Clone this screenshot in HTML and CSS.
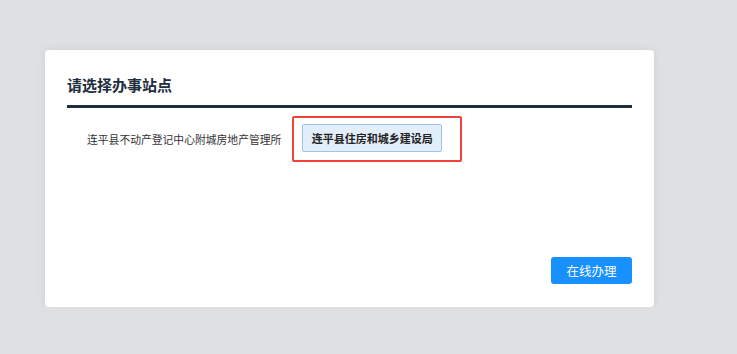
FILE: index.html
```html
<!DOCTYPE html>
<html lang="zh">
<head>
  <meta charset="UTF-8">
  <title>请选择办事站点</title>
  <link rel="stylesheet" href="styles.css">
</head>
<body>
  <div class="dialog">
    <h2 class="dialog-title">请选择办事站点</h2>
    <div class="site-row">
      <span class="site-name">连平县不动产登记中心附城房地产管理所</span>
      <div class="site-select">
        <button class="site-btn">连平县住房和城乡建设局</button>
      </div>
    </div>
    <div class="dialog-footer">
      <button class="primary-btn">在线办理</button>
    </div>
  </div>
</body>
</html>
```

FILE: styles.css
```css
body {
  margin: 0;
  background-color: #dfe0e2;
  font-family: "Noto Sans CJK SC", "Noto Sans", sans-serif;
  color: #333;
}
.dialog {
  box-sizing: border-box;
  width: 609px;
  height: 257px;
  margin: 50px 0 0 45px;
  padding: 23px 22px 23px 22px;
  background: #fff;
  border-radius: 4px;
  box-shadow: 0 0 8px rgba(0,0,0,0.08);
  display: flex;
  flex-direction: column;
}
.dialog-title {
  margin: 0;
  font-size: 15px;
  line-height: 24px;
  font-weight: bold;
  color: #1f2d3d;
  padding-bottom: 8px;
  border-bottom: 3px solid #1f2d3d;
}
.site-row {
  display: flex;
  align-items: center;
  margin-top: 8px;
  padding-left: 20px;
}
.site-name {
  font-size: 10.8px;
  color: #333;
}
.site-select {
  margin-left: 11px;
  border: 2px solid #f0413a;
  border-radius: 2px;
  padding: 6px 18px 8px 8px;
}
.site-btn {
  display: block;
  width: 140px;
  height: 28px;
  padding: 0;
  background: #e3eefb;
  border: 1px solid #9ec2ea;
  border-radius: 2px;
  font-family: inherit;
  font-size: 11px;
  font-weight: bold;
  color: #222;
}
.dialog-footer {
  margin-top: auto;
  display: flex;
  justify-content: flex-end;
}
.primary-btn {
  width: 81px;
  height: 27px;
  padding: 0;
  background: #1890ff;
  border: none;
  border-radius: 3px;
  color: #fff;
  font-family: inherit;
  font-size: 12.5px;
}
```
